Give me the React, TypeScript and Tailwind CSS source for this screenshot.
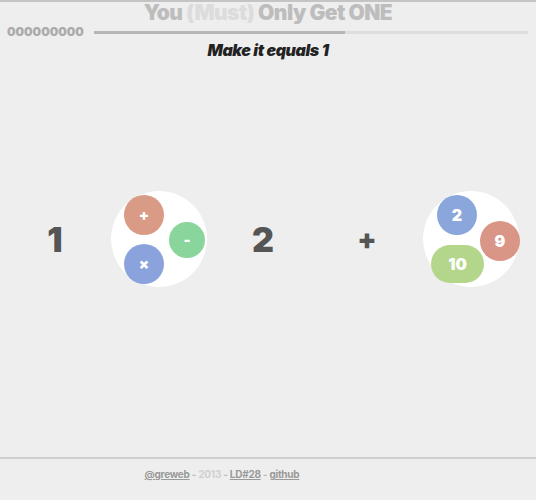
const font = { fontFamily: 'Inter, "DejaVu Sans", sans-serif' };

function Bubble({ className, children }: { className: string; children: React.ReactNode }) {
  return (
    <div className={`absolute flex items-center justify-center rounded-full text-white font-black ${className}`}>
      {children}
    </div>
  );
}

export default function App() {
  return (
    <div className="w-[536px] h-[500px] bg-[#eeeeee] border-t-2 border-[#c4c4c4] flex flex-col" style={font}>
      <h1 className="text-center text-[21px] leading-[22px] font-black text-[#bdbdbd] tracking-tight">
        You <span className="text-[#dcdcdc]">(Must)</span> Only Get ONE
      </h1>
      <div className="flex items-center gap-[10px] pl-[7px] pr-[8px] mt-[1px]">
        <span className="text-[12px] leading-[14px] font-black text-[#ababab] tracking-normal">000000000</span>
        <div className="flex-1 h-[3px] bg-[#dedede] flex">
          <div className="w-[251px] bg-[#b6b6b6]" />
        </div>
      </div>
      <p className="text-center text-[16px] leading-[18px] font-black italic text-[#222] tracking-tight mt-[2px]">
        Make it equals 1
      </p>

      <div className="grid grid-cols-[repeat(5,104px)] ml-[3px] mt-[132px] items-center justify-items-center">
        <span className="text-[34px] font-black text-[#555]">1</span>
        <div className="relative w-[96px] h-[96px] rounded-full bg-white">
          <Bubble className="w-[40px] h-[40px] left-[13px] top-[4px] bg-[#d99a86] text-[15px]">+</Bubble>
          <Bubble className="w-[36px] h-[36px] left-[58px] top-[31px] bg-[#8ad59c] text-[15px]">-</Bubble>
          <Bubble className="w-[40px] h-[40px] left-[13px] top-[53px] bg-[#8aa3dc] text-[15px]">×</Bubble>
        </div>
        <span className="text-[34px] font-black text-[#555]">2</span>
        <span className="text-[28px] font-black text-[#555]">+</span>
        <div className="relative w-[96px] h-[96px] rounded-full bg-white">
          <Bubble className="w-[40px] h-[40px] left-[14px] top-[4px] bg-[#8aa6db] text-[16px]">2</Bubble>
          <Bubble className="w-[40px] h-[40px] left-[57px] top-[30px] bg-[#d99586] text-[16px]">9</Bubble>
          <Bubble className="w-[53px] h-[38px] left-[8px] top-[54px] bg-[#b4d68a] text-[16px]">10</Bubble>
        </div>
      </div>

      <div className="mt-auto h-[43px] border-t-2 border-[#cfcfcf] flex justify-center pr-[92px] pt-[8px]">
        <p className="text-[10px] font-bold text-[#bbbbbb] tracking-tight">
          <span className="underline text-[#999]">@greweb</span> - <span className="text-[#d0d0d0]">2013</span> -{' '}
          <span className="underline text-[#999]">LD#28</span> - <span className="underline text-[#999]">github</span>
        </p>
      </div>
    </div>
  );
}
